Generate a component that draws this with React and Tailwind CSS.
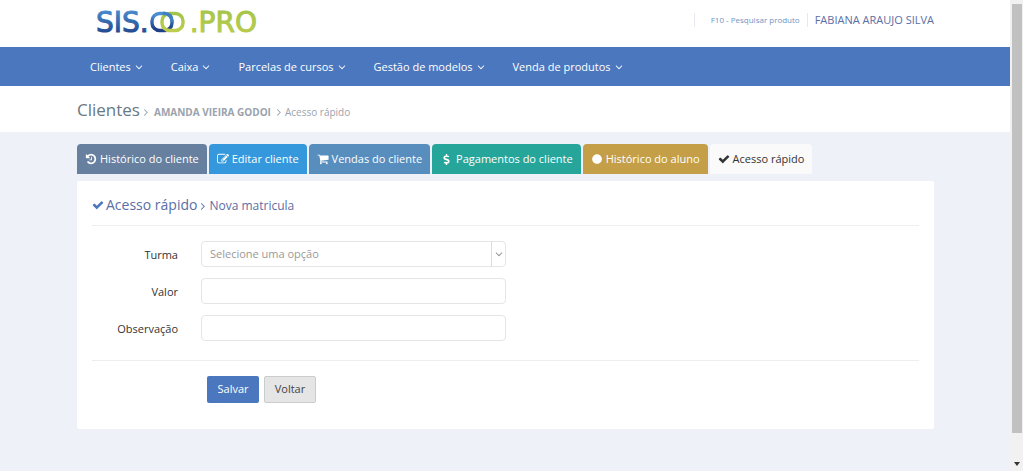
import { useState } from "react"
import { FaCircle, FaDollarSign } from "react-icons/fa"

const paths = {
    down: "M1395 736q0 13-10 23l-466 466q-10 10-23 10t-23-10l-466-466q-10-10-10-23t10-23l50-50q10-10 23-10t23 10l393 393 393-393q10-10 23-10t23 10l50 50q10 10 10 23z",
    right: "M1171 960q0 13-10 23l-466 466q-10 10-23 10t-23-10l-50-50q-10-10-10-23t10-23l393-393-393-393q-10-10-10-23t10-23l50-50q10-10 23-10t23 10l466 466q10 10 10 23z",
    check: "M1671 566q0 40-28 68l-724 724-136 136q-28 28-68 28t-68-28l-136-136-362-362q-28-28-28-68t28-68l136-136q28-28 68-28t68 28l294 295 656-657q28-28 68-28t68 28l136 136q28 28 28 68z",
    history: "M1664 896q0 156-61 298t-164 245-245 164-298 61q-172 0-327-72.5t-264-204.5q-7-10-6.5-22.5t8.5-20.5l137-138q10-9 25-9 16 2 23 12 73 95 179 147t225 52q104 0 198.5-40.5t163.5-109.5 109.5-163.5 40.5-198.5-40.5-198.5-109.5-163.5-163.5-109.5-198.5-40.5q-98 0-188 35.5t-160 101.5l137 138q31 30 14 69-17 40-59 40h-448q-26 0-45-19t-19-45v-448q0-42 40-59 39-17 69 14l130 129q107-101 244.5-156.5t284.5-55.5q156 0 298 61t245 164 164 245 61 298zm-640-288v448q0 14-9 23t-23 9h-320q-14 0-23-9t-9-23v-64q0-14 9-23t23-9h224v-352q0-14 9-23t23-9h64q14 0 23 9t9 23z",
    edit: "M888 1184l116-116-152-152-116 116v56h96v96h56zm440-720q-16-16-33 1l-350 350q-17 17-1 33t33-1l350-350q17-17 1-33zm80 594v190q0 119-84.5 203.5t-203.5 84.5h-832q-119 0-203.5-84.5t-84.5-203.5v-832q0-119 84.5-203.5t203.5-84.5h832q63 0 117 25 15 7 18 23 3 17-9 29l-49 49q-14 14-32 8-23-6-45-6h-832q-66 0-113 47t-47 113v832q0 66 47 113t113 47h832q66 0 113-47t47-113v-126q0-13 9-22l64-64q15-15 35-7t20 29zm-96-738l288 288-672 672h-288v-288zm444 132l-92 92-288-288 92-92q28-28 68-28t68 28l152 152q28 28 28 68t-28 68z",
    cart: "M704 1536q0 52-38 90t-90 38-90-38-38-90 38-90 90-38 90 38 38 90zm896 0q0 52-38 90t-90 38-90-38-38-90 38-90 90-38 90 38 38 90zm128-1088v512q0 24-16.5 42.5t-40.5 21.5l-1044 122q13 60 13 70 0 16-24 64h920q26 0 45 19t19 45-19 45-45 19h-1024q-26 0-45-19t-19-45q0-11 8-31.5t16-36 21.5-40 15.5-29.5l-177-823h-204q-26 0-45-19t-19-45 19-45 45-19h256q16 0 28.5 6.5t19.5 15.5 13 24.5 8 26 5.5 29.5 4.5 26h1201q26 0 45 19t19 45z",
}

function Icon({ name, className = "" }) {
    return (
        <svg
            viewBox="0 0 1792 1792"
            fill="currentColor"
            aria-hidden="true"
            className={`size-3 shrink-0 ${className}`}
        >
            <path d={paths[name]} />
        </svg>
    )
}

const menu = ["Clientes", "Caixa", "Parcelas de cursos", "Gestão de modelos", "Venda de produtos"]

const tabs = [
    { label: "Histórico do cliente", icon: <Icon name="history" />, style: "bg-[#67809f] text-white" },
    { label: "Editar cliente", icon: <Icon name="edit" />, style: "bg-[#3598dc] text-white" },
    { label: "Vendas do cliente", icon: <Icon name="cart" />, style: "bg-[#578ebe] text-white" },
    { label: "Pagamentos do cliente", icon: <FaDollarSign className="mx-px size-[11px]" />, style: "bg-[#26a69a] text-white" },
    { label: "Histórico do aluno", icon: <FaCircle className="mx-px size-[10px]" />, style: "bg-[#c49f47] text-white" },
    { label: "Acesso rápido", icon: <Icon name="check" />, style: "bg-[#fafafa] text-[#333]" },
]

function Logo() {
    return (
        <svg width="164" height="36" viewBox="0 0 164 36" role="img" aria-label="SIS.OO.PRO">
            <defs>
                <linearGradient id="blue" x1="0" y1="0" x2="0" y2="1">
                    <stop offset="0.1" stopColor="#4a8fd0" />
                    <stop offset="0.9" stopColor="#1f3f86" />
                </linearGradient>
                <linearGradient id="green" x1="0" y1="0" x2="0" y2="1">
                    <stop offset="0" stopColor="#a3c44a" />
                    <stop offset="1" stopColor="#bccc4c" />
                </linearGradient>
            </defs>
            <g fontFamily="'DejaVu Sans', sans-serif" fontSize="28" strokeWidth="1">
                <text x="1" y="28" fill="url(#blue)" stroke="url(#blue)">SIS.</text>
                <text x="162" y="28" textAnchor="end" fill="url(#green)" stroke="url(#green)">.PRO</text>
            </g>
            <g fill="none" strokeWidth="3.4">
                <rect x="57" y="9.5" width="20" height="17" rx="7.5" stroke="url(#blue)" />
                <rect x="67" y="9.5" width="21" height="17" rx="7.5" stroke="url(#green)" />
                <path d="M68 9.5h1.5Q77 9.5 77 18" stroke="#3f7fc2" />
            </g>
        </svg>
    )
}

function Field({ id, label, children }) {
    return (
        <div className="flex items-center gap-[23px]">
            <label htmlFor={id} className="w-[86px] shrink-0 pt-[2px] text-right text-[#333]">
                {label}
            </label>
            {children}
        </div>
    )
}

export default function App() {
    const [turma, setTurma] = useState("")
    const [valor, setValor] = useState("")
    const [observacao, setObservacao] = useState("")

    const inputStyle = "h-[26px] w-full max-w-[305px] rounded-sm border border-[#e5e5e5] bg-white px-2 outline-none"

    return (
        <div className="flex min-h-screen bg-[#eef1f8] font-['Open_Sans',sans-serif] text-[11px]">
            <div className="min-w-0 flex-1">
                {/* Topo */}
                <header className="flex h-[47px] items-start justify-between bg-white pr-19 pl-[77px]">
                    <a href="#" className="mt-1 ml-[18px]">
                        <Logo />
                    </a>
                    <div className="mt-[13px] flex h-[14px] items-center">
                        <a href="#" className="border-x border-[#e5e8ee] pr-[7px] pl-4 text-[8px] leading-[14px] text-[#6f94c4]">
                            F10 - Pesquisar produto
                        </a>
                        <a href="#" className="pl-[7px] text-[#5b6ea5]">FABIANA ARAUJO SILVA</a>
                    </div>
                </header>

                {/* Menu */}
                <nav className="flex h-[39px] items-center gap-[26px] bg-[#4b77be] px-[90px] pt-px text-white">
                    {menu.map(item => (
                        <button key={item} className="flex items-center gap-[2px]">
                            {item}
                            <Icon name="down" />
                        </button>
                    ))}
                </nav>

                {/* Caminho */}
                <div className="flex h-[46px] items-baseline bg-white pt-[11px] pr-19 pl-[77px] text-[10px] text-[#9aa3ae]">
                    <h1 className="text-[17px] text-[#697882]">Clientes</h1>
                    <Icon name="right" className="translate-y-[2px]" />
                    <a href="#" className="ml-[2px] font-bold">AMANDA VIEIRA GODOI</a>
                    <Icon name="right" className="ml-[2px] translate-y-[2px]" />
                    <span>Acesso rápido</span>
                </div>

                <main className="pt-3 pr-19 pb-[42px] pl-[77px]">
                    {/* Abas */}
                    <div className="flex gap-[2px]">
                        {tabs.map(({ label, icon, style }) => (
                            <button
                                key={label}
                                className={`flex h-[30px] items-center gap-[3px] rounded-t-sm px-2 whitespace-nowrap ${style}`}
                            >
                                {icon}
                                {label}
                            </button>
                        ))}
                    </div>

                    <section className="mt-[7px] rounded-xs bg-white px-[15px] pt-[13px] pb-[26px]">
                        <div className="flex h-8 items-baseline border-b border-[#eee] text-[12px] text-[#5b6ea5]">
                            <Icon name="check" className="mr-[2px] translate-y-px text-[#4b77be]" />
                            <h2 className="text-[14px]">Acesso rápido</h2>
                            <Icon name="right" className="translate-y-[2px]" />
                            <span>Nova matricula</span>
                        </div>

                        <form onSubmit={e => e.preventDefault()}>
                            <div className="flex flex-col gap-[11px] border-b border-[#eee] pt-[15px] pb-[19px]">
                                <Field id="turma" label="Turma">
                                    <div className="relative w-full max-w-[305px]">
                                        <select
                                            id="turma"
                                            value={turma}
                                            onChange={e => setTurma(e.target.value)}
                                            className={`${inputStyle} block appearance-none text-[#999]`}
                                        >
                                            <option value="">Selecione uma opção</option>
                                        </select>
                                        <span className="pointer-events-none absolute inset-y-0 right-0 flex w-[15px] items-center justify-center border-l border-[#ddd]">
                                            <Icon name="down" className="text-[#888]" />
                                        </span>
                                    </div>
                                </Field>
                                <Field id="valor" label="Valor">
                                    <input
                                        id="valor"
                                        type="text"
                                        value={valor}
                                        onChange={e => setValor(e.target.value)}
                                        className={inputStyle}
                                    />
                                </Field>
                                <Field id="observacao" label="Observação">
                                    <input
                                        id="observacao"
                                        type="text"
                                        value={observacao}
                                        onChange={e => setObservacao(e.target.value)}
                                        className={inputStyle}
                                    />
                                </Field>
                            </div>

                            <div className="mt-[15px] flex gap-[5px] pl-[115px]">
                                <button type="submit" className="h-[27px] w-[52px] rounded-xs bg-[#4b77be] text-white">
                                    Salvar
                                </button>
                                <button type="button" className="h-[27px] w-[52px] rounded-xs border border-[#ccc] bg-[#e5e5e5] text-[#444]">
                                    Voltar
                                </button>
                            </div>
                        </form>
                    </section>
                </main>
            </div>

            {/* Barra de rolagem */}
            <div className="flex w-[13px] shrink-0 flex-col items-center bg-[#f1f1f1] pt-1" aria-hidden="true">
                <div className="w-[10px] flex-1 bg-[#c1c1c1]" />
                <svg className="mt-[29px] mb-[5px]" width="6" height="4" viewBox="0 0 6 4">
                    <path d="M0 0h6L3 4z" fill="#333" />
                </svg>
            </div>
        </div>
    )
}
